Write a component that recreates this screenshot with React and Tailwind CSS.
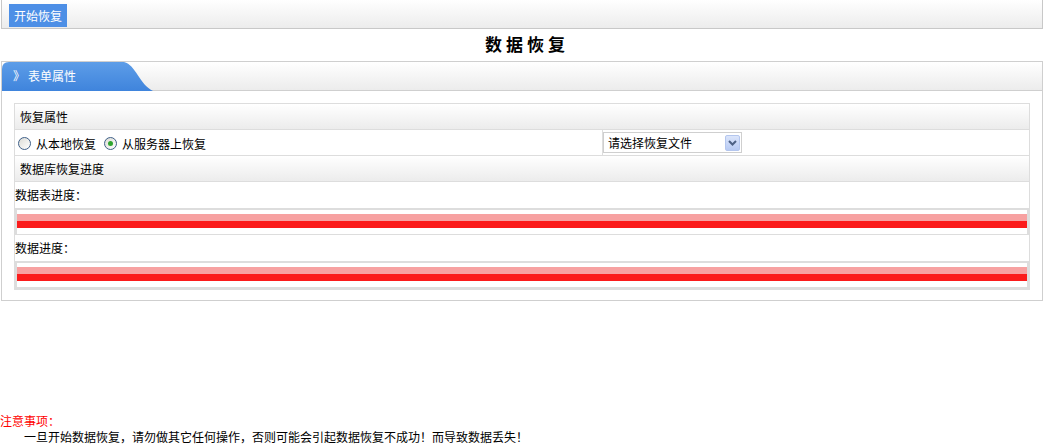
import React, { useState } from 'react'

const font = { fontFamily: '"Noto Sans CJK SC", "Liberation Sans", sans-serif' }

// radio drawn by hand so it looks like the old XP-style control
const Radio = ({ checked, onClick }) => (
    <span
        onClick={onClick}
        className='inline-flex items-center justify-center w-[13px] h-[13px] rounded-full border border-[#3e5f88] bg-gradient-to-br from-[#dcdcd6] to-white cursor-pointer'
    >
        {checked && <span className='w-[5px] h-[5px] rounded-full bg-[#2fa52f]' />}
    </span>
)

const ProgressBox = ({ last }) => (
    <div className={`h-[27px] border-x-[2px] border-t-[2px] border-[#dddddd] pt-[4px] ${last ? 'border-b-[3px] h-[29px]' : 'border-b-[1px]'}`}>
        <div className='h-[7px] bg-[#f7a1a1]' />
        <div className='h-[7px] bg-[#fb1b1b]' />
    </div>
)

const App = () => {
    const [source, setSource] = useState('server')

    return (
        <div className='w-[1050px] h-[447px] bg-white text-[12px] text-black leading-none' style={font}>
            {/* toolbar */}
            <div className='ml-px w-[1042px] h-[29px] border-x border-b border-[#c8c8c8] bg-gradient-to-b from-white to-[#ececec] pt-[4px] pl-[7px]'>
                <button className='h-[23px] w-[58px] bg-[#4d8fe6] text-white text-[12px] flex items-center justify-center'>
                    开始恢复
                </button>
            </div>

            <div className='h-[32px] flex items-center justify-center text-[17px] font-bold tracking-[4px] pl-[4px] pb-[3px]'>
                数据恢复
            </div>

            {/* form panel */}
            <div className='ml-px w-[1042px] h-[240px] border border-[#cfcfcf]'>
                <div className='relative h-[29px] border-b border-[#cfcfcf] bg-gradient-to-b from-white to-[#ececec]'>
                    <svg className='absolute left-0 top-0' width='152' height='29' viewBox='0 0 152 29'>
                        <defs>
                            <linearGradient id='tabg' x1='0' y1='0' x2='0' y2='1'>
                                <stop offset='0' stopColor='#5d9de8' />
                                <stop offset='1' stopColor='#3f84dc' />
                            </linearGradient>
                        </defs>
                        <path d='M0 29 V7 Q0 0 7 0 H122 C134 3, 137 22, 151 29 Z' fill='url(#tabg)' />
                    </svg>
                    <div className='relative flex items-center h-full pl-[11px] text-white gap-[3px]'>
                        <span>》</span>
                        <span>表单属性</span>
                    </div>
                </div>

                <div className='pt-[12px] px-[12px]'>
                    <div className='border border-[#dddddd] border-b-0'>
                        <div className='h-[26px] flex items-center pl-[5px] border-b border-[#dddddd] bg-gradient-to-b from-white to-[#ececec]'>
                            恢复属性
                        </div>
                        <div className='h-[26px] flex border-b border-[#dddddd]'>
                            <div className='w-[588px] border-r border-[#dddddd] flex items-center pl-[3px] pt-[2px]'>
                                <Radio checked={source === 'local'} onClick={() => setSource('local')} />
                                <span className='ml-[5px] mr-[8px]'>从本地恢复</span>
                                <Radio checked={source === 'server'} onClick={() => setSource('server')} />
                                <span className='ml-[5px]'>从服务器上恢复</span>
                            </div>
                            <div className='flex items-center'>
                                <div className='w-[139px] h-[21px] border border-[#cfcfcf] bg-white flex items-center justify-between pl-[4px] pr-[1px]'>
                                    <span>请选择恢复文件</span>
                                    <span className='w-[15px] h-[16px] rounded-[2px] border border-[#b4c6ee] bg-gradient-to-b from-[#dbe5fb] to-[#b7caf3] flex items-center justify-center'>
                                        <svg width='9' height='6' viewBox='0 0 9 6'>
                                            <path d='M1 1 L4.5 4.5 L8 1' stroke='#4d6185' strokeWidth='2' fill='none' />
                                        </svg>
                                    </span>
                                </div>
                            </div>
                        </div>
                        <div className='h-[26px] flex items-center pl-[5px] border-b border-[#dddddd] bg-gradient-to-b from-white to-[#ececec]'>
                            数据库恢复进度
                        </div>
                        <div className='h-[26px] flex items-center'>数据表进度：</div>
                        <ProgressBox />
                        <div className='h-[26px] flex items-center'>数据进度：</div>
                        <ProgressBox last />
                    </div>
                </div>
            </div>

            {/* notes */}
            <div className='mt-[114px]'>
                <div className='text-[#ff0000] h-[16px]'>注意事项：</div>
                <div className='pl-[24px]'>一旦开始数据恢复，请勿做其它任何操作，否则可能会引起数据恢复不成功！而导致数据丢失！</div>
            </div>
        </div>
    )
}

export default App
